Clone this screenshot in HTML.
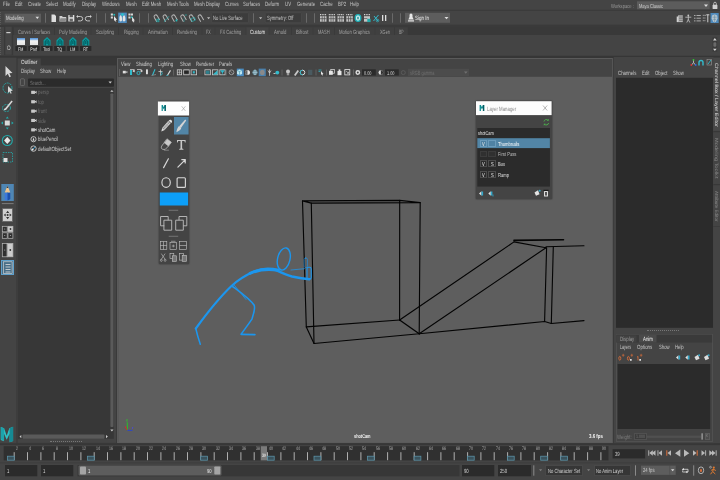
<!DOCTYPE html>
<html><head><meta charset="utf-8"><title>Maya - Blue Pencil</title>
<style>
html,body{margin:0;padding:0;background:#444;}
body{width:720px;height:480px;position:relative;overflow:hidden;font-family:"Liberation Sans",sans-serif;}
div{position:absolute;box-sizing:border-box;}
.t{position:absolute;white-space:nowrap;line-height:8px;height:8px;transform-origin:0 50%;}
svg{position:absolute;left:0;top:0;overflow:visible;}
#root{left:0;top:0;width:720px;height:480px;will-change:transform;}
</style></head><body><div id="root">

<span class="t" style="left:3px;top:-0.1px;font-size:6.11px;color:#c6c6c6;transform:scaleX(0.71) rotate(0.03deg);">File</span>
<span class="t" style="left:15px;top:-0.1px;font-size:6.11px;color:#c6c6c6;transform:scaleX(0.71) rotate(0.03deg);">Edit</span>
<span class="t" style="left:28.3px;top:-0.1px;font-size:6.11px;color:#c6c6c6;transform:scaleX(0.71) rotate(0.03deg);">Create</span>
<span class="t" style="left:46.3px;top:-0.1px;font-size:6.11px;color:#c6c6c6;transform:scaleX(0.71) rotate(0.03deg);">Select</span>
<span class="t" style="left:63px;top:-0.1px;font-size:6.11px;color:#c6c6c6;transform:scaleX(0.71) rotate(0.03deg);">Modify</span>
<span class="t" style="left:82px;top:-0.1px;font-size:6.11px;color:#c6c6c6;transform:scaleX(0.71) rotate(0.03deg);">Display</span>
<span class="t" style="left:101.7px;top:-0.1px;font-size:6.11px;color:#c6c6c6;transform:scaleX(0.71) rotate(0.03deg);">Windows</span>
<span class="t" style="left:125.8px;top:-0.1px;font-size:6.11px;color:#c6c6c6;transform:scaleX(0.71) rotate(0.03deg);">Mesh</span>
<span class="t" style="left:142px;top:-0.1px;font-size:6.11px;color:#c6c6c6;transform:scaleX(0.71) rotate(0.03deg);">Edit Mesh</span>
<span class="t" style="left:166.7px;top:-0.1px;font-size:6.11px;color:#c6c6c6;transform:scaleX(0.71) rotate(0.03deg);">Mesh Tools</span>
<span class="t" style="left:193.8px;top:-0.1px;font-size:6.11px;color:#c6c6c6;transform:scaleX(0.71) rotate(0.03deg);">Mesh Display</span>
<span class="t" style="left:225px;top:-0.1px;font-size:6.11px;color:#c6c6c6;transform:scaleX(0.71) rotate(0.03deg);">Curves</span>
<span class="t" style="left:243.3px;top:-0.1px;font-size:6.11px;color:#c6c6c6;transform:scaleX(0.71) rotate(0.03deg);">Surfaces</span>
<span class="t" style="left:265px;top:-0.1px;font-size:6.11px;color:#c6c6c6;transform:scaleX(0.71) rotate(0.03deg);">Deform</span>
<span class="t" style="left:285px;top:-0.1px;font-size:6.11px;color:#c6c6c6;transform:scaleX(0.71) rotate(0.03deg);">UV</span>
<span class="t" style="left:296.7px;top:-0.1px;font-size:6.11px;color:#c6c6c6;transform:scaleX(0.71) rotate(0.03deg);">Generate</span>
<span class="t" style="left:320px;top:-0.1px;font-size:6.11px;color:#c6c6c6;transform:scaleX(0.71) rotate(0.03deg);">Cache</span>
<span class="t" style="left:337.5px;top:-0.1px;font-size:6.11px;color:#c6c6c6;transform:scaleX(0.71) rotate(0.03deg);">BP2</span>
<span class="t" style="left:350px;top:-0.1px;font-size:6.11px;color:#c6c6c6;transform:scaleX(0.71) rotate(0.03deg);">Help</span>
<span class="t" style="left:611.3px;top:1.6px;font-size:5.68px;color:#969696;transform:scaleX(0.731) rotate(0.03deg);">Workspace :</span>
<svg width="720" height="480"><rect x="637" y="1.3" width="72.7" height="8" fill="#5c5c5c"/></svg>
<span class="t" style="left:638.7px;top:1.6px;font-size:5.68px;color:#cecece;transform:scaleX(0.711) rotate(0.03deg);">Maya Classic</span>
<svg width="720" height="480"><path d="M704 4.6h4l-2 2.3z" fill="#ddd"/><rect x="712.6" y="4.8" width="4.8" height="4.3" rx="0.6" fill="#d0d0d0"/><path d="M713.7 5v-1.4a1.3 1.4 0 0 1 2.6 0v1.4" stroke="#d0d0d0" stroke-width="0.8" fill="none"/></svg>
<svg width="720" height="480"><rect x="0" y="9.8" width="720" height="0.9" fill="#383838"/></svg>
<div style="left:0px;top:11.5px;width:3px;height:13px;border-left:1.2px dotted #5c5c5c;"></div>
<svg width="720" height="480"><rect x="4.7" y="13.7" width="36.3" height="8.8" fill="#5d5d5d"/></svg>
<span class="t" style="left:6px;top:14.2px;font-size:6.11px;color:#ddd;transform:scaleX(0.71) rotate(0.03deg);">Modeling</span>
<svg width="720" height="480"><rect x="45" y="13.3" width="0.9" height="9.4" fill="#6e6e6e"/><rect x="96" y="13.3" width="0.9" height="9.4" fill="#6e6e6e"/><rect x="105" y="13.3" width="0.9" height="9.4" fill="#6e6e6e"/><rect x="139" y="13.3" width="0.9" height="9.4" fill="#6e6e6e"/><rect x="148" y="13.3" width="0.9" height="9.4" fill="#6e6e6e"/><rect x="253" y="13.3" width="0.9" height="9.4" fill="#6e6e6e"/><rect x="306" y="13.3" width="0.9" height="9.4" fill="#6e6e6e"/><rect x="314" y="13.3" width="0.9" height="9.4" fill="#6e6e6e"/><rect x="392" y="13.3" width="0.9" height="9.4" fill="#6e6e6e"/><rect x="400" y="13.3" width="0.9" height="9.4" fill="#6e6e6e"/><rect x="211.7" y="12.8" width="36.8" height="10" rx="0.8" fill="#3c3c3c" stroke="#4e4e4e" stroke-width="0.6"/></svg>
<span class="t" style="left:213.4px;top:14.2px;font-size:6.11px;color:#c6c6c6;transform:scaleX(0.681) rotate(0.03deg);">No Live Surface</span>
<svg width="720" height="480"><rect x="265.2" y="12.8" width="36.3" height="10" rx="0.8" fill="#3c3c3c" stroke="#4e4e4e" stroke-width="0.6"/></svg>
<span class="t" style="left:267px;top:14.2px;font-size:6.11px;color:#c6c6c6;transform:scaleX(0.681) rotate(0.03deg);">Symmetry: Off</span>
<svg width="720" height="480"><rect x="405" y="12.8" width="45" height="10" fill="#5d5d5d"/></svg>
<span class="t" style="left:415px;top:14.2px;font-size:6.11px;color:#f0f0f0;transform:scaleX(0.736) rotate(0.03deg);">Sign In</span>
<svg width="720" height="480"><rect x="118.2" y="12.6" width="8.6" height="10.4" fill="#4e8abc"/><rect x="710.5" y="13" width="8.2" height="10" fill="#4e8abc"/></svg>
<svg width="720" height="480">
<path d="M35.5 16.8h3.6l-1.8 2.2z" fill="#ddd"/>
<path d="M51.5 14.5h3l1.5 1.5v6h-4.5z" fill="#ddd"/>
<path d="M59.5 16h2.5l.8 1h3.4v4.5h-6.7z" fill="#d0d0d0"/><path d="M60.5 18.3h6l-1 3.2h-6z" fill="#8a8a8a"/>
<rect x="68.3" y="15" width="6" height="6.5" rx="0.5" fill="#ddd"/><rect x="69.6" y="15" width="3.3" height="2.2" fill="#555"/><rect x="69.6" y="18.7" width="3.3" height="2.8" fill="#666"/>
<path d="M77 16.5h3.5a2.2 2.2 0 0 1 0 4.4h-2.5" fill="none" stroke="#d0d0d0" stroke-width="0.9"/><path d="M78 15l-1.8 1.5 1.8 1.5z" fill="#d0d0d0"/>
<path d="M91 16.5h-3.5a2.2 2.2 0 0 0 0 4.4h2.5" fill="none" stroke="#d0d0d0" stroke-width="0.9"/><path d="M90 15l1.8 1.5-1.8 1.5z" fill="#d0d0d0"/>
<path d="M110.8 13.5h2.1v2.1h-2.1zM110.8 16.4h2.1v2.1h-2.1z" fill="#d8d8d8"/><rect x="113.4" y="13.9" width="1.7" height="1.7" fill="#2bb"/><path d="M114 16l3 3.8-1.3.1.7 1.5-.8.3-.7-1.5-.9.8z" fill="#e8e8e8"/>
<path d="M119.4 18.5c0-2 .6-3.3 1.3-3.3s1.3 1.3 1.3 3.3v1.5c0 1-.5 1.4-1.3 1.4s-1.3-.4-1.3-1.4zM122.7 18.5c0-2 .6-3.3 1.3-3.3s1.4 1.3 1.4 3.3v1.5c0 1-.5 1.4-1.4 1.4s-1.3-.4-1.3-1.4z" fill="#e4e4e4"/><rect x="121.3" y="13.5" width="2.4" height="2" fill="#2cc"/>
<path d="M128.4 13.5h2.1v2.1h-2.1zM130.9 13.5h2.1v2.1h-2.1zM128.4 16.4h2.1v2.1h-2.1z" fill="#d8d8d8"/><rect x="130.9" y="16.4" width="1.7" height="1.7" fill="#2bb"/><path d="M132.1 16.8l2.8 3.7-1.2.1.7 1.5-.8.3-.7-1.5-.8.8z" fill="#e8e8e8"/>
<path d="M207 17.2h3.2l-1.6 2z" fill="#bbb"/><path d="M259 17.2h3.2l-1.6 2z" fill="#bbb"/>
<path d="M444.5 17h4l-2 2.3z" fill="#ddd"/>
<path d="M409.5 15a1.5 1.5 0 0 1 3 0v2l1.2 2.5h-5.4l1.2-2.5z" fill="#e8e8e8"/><rect x="408" y="20.3" width="6" height="1.2" fill="#e8e8e8"/>
</svg>
<svg width="720" height="480"><g transform="translate(156.3 17.6) rotate(-30)"><path d="M-1.7 3.8v-4.6a1.7 2 0 0 1 3.4 0v4.6" fill="none" stroke="#b4b4b4" stroke-width="1"/></g><path d="M157.1 18.5v3.8M158.6 18.5v3.8M156.1 19.7h3.6M156.1 21.2h3.6" stroke="#2bb" stroke-width="0.5"/><g transform="translate(165.3 17.6) rotate(-30)"><path d="M-1.7 3.8v-4.6a1.7 2 0 0 1 3.4 0v4.6" fill="none" stroke="#b4b4b4" stroke-width="1"/></g><path d="M164.4 21.8c1-2.5 3-3 4.5-5.5" stroke="#2bb" stroke-width="0.7" fill="none"/><g transform="translate(174 17.6) rotate(-30)"><path d="M-1.7 3.8v-4.6a1.7 2 0 0 1 3.4 0v4.6" fill="none" stroke="#b4b4b4" stroke-width="1"/></g><rect x="175.6" y="19.5" width="1.7" height="1.9" fill="#2bb"/><g transform="translate(183 17.6) rotate(-30)"><path d="M-1.7 3.8v-4.6a1.7 2 0 0 1 3.4 0v4.6" fill="none" stroke="#b4b4b4" stroke-width="1"/></g><path d="M184.1 17.5v4.5M185.1 14.3l1.5 1.5M186.6 14.3l-1.5 1.5" stroke="#2bb" stroke-width="0.6" stroke-dasharray="0.8 0.5"/><g transform="translate(191.5 17.6) rotate(-30)"><path d="M-1.7 3.8v-4.6a1.7 2 0 0 1 3.4 0v4.6" fill="none" stroke="#b4b4b4" stroke-width="1"/></g><path d="M191.1 18.5l3.5-1 .8 2.7-3.5 1.3z" fill="none" stroke="#2bb" stroke-width="0.6"/><g transform="translate(200.3 17.6) rotate(-30)"><path d="M-1.7 3.8v-4.6a1.7 2 0 0 1 3.4 0v4.6" fill="none" stroke="#b4b4b4" stroke-width="1"/></g></svg>
<svg width="720" height="480"><rect x="320" y="16.2" width="6.5" height="5.5" fill="#c4c4c4"/><path d="M320 14.7h6.5" stroke="#d8d8d8" stroke-width="1.3" stroke-dasharray="1 0.7"/><path d="M320 18.7h6.5M322.2 16.2v5.5M324.4 16.2v5.5" stroke="#484848" stroke-width="0.7"/><rect x="328.8" y="16.2" width="6.5" height="5.5" fill="#c4c4c4"/><path d="M328.8 14.7h6.5" stroke="#d8d8d8" stroke-width="1.3" stroke-dasharray="1 0.7"/><path d="M328.8 18.7h6.5M331 16.2v5.5M333.2 16.2v5.5" stroke="#484848" stroke-width="0.7"/><rect x="337.5" y="16.2" width="6.5" height="5.5" fill="#c4c4c4"/><path d="M337.5 14.7h6.5" stroke="#d8d8d8" stroke-width="1.3" stroke-dasharray="1 0.7"/><path d="M337.5 18.7h6.5M339.7 16.2v5.5M341.9 16.2v5.5" stroke="#484848" stroke-width="0.7"/><rect x="346.3" y="16.2" width="6.5" height="5.5" fill="#c4c4c4"/><path d="M346.3 14.7h6.5" stroke="#d8d8d8" stroke-width="1.3" stroke-dasharray="1 0.7"/><path d="M346.3 18.7h6.5M348.5 16.2v5.5M350.7 16.2v5.5" stroke="#484848" stroke-width="0.7"/><ellipse cx="358" cy="18" rx="2.8" ry="3.3" fill="#cfeff0" stroke="#1fb0b8" stroke-width="1.3"/><ellipse cx="358" cy="18" rx="0.8" ry="1.5" fill="#2a8a90"/><rect x="364" y="16.2" width="6" height="5.5" fill="#c4c4c4"/><path d="M364 14.7h6" stroke="#d8d8d8" stroke-width="1.3" stroke-dasharray="1 0.7"/><rect x="367.3" y="18.8" width="3.3" height="3.3" fill="#2aa"/><path d="M364 18.5h3.3" stroke="#484848" stroke-width="0.6"/><path d="M373.5 21l5-6M374 16l4 5" stroke="#3bc" stroke-width="1"/><circle cx="377.5" cy="20.5" r="1.3" fill="none" stroke="#3bc" stroke-width="0.7"/><rect x="382" y="15" width="1.3" height="6" fill="#ddd"/><rect x="385" y="15" width="1.3" height="6" fill="#ddd"/><path d="M678 15.3h4.8v6.8h-4.8z" fill="#b4b4b4"/><path d="M676.7 16.5h1.5v5.6h-1.5z" fill="#d0d0d0"/><path d="M679 17h3.8M679 18.7h3.8M679 20.4h3.8" stroke="#555" stroke-width="0.6"/><circle cx="688.3" cy="15.3" r="0.9" fill="#c8c8c8"/><path d="M688.3 16v4M685.3 17.2h6M688.3 19.5l-1.5 3M688.3 19.5l1.5 3" stroke="#c8c8c8" stroke-width="0.8" fill="none"/><path d="M694 15.5h1.5M696.5 15.5h4.3M694 18.2h1.5M696.5 18.2h4.3M694 20.9h1.5M696.5 20.9h4.3" stroke="#b8b8b8" stroke-width="0.9"/><path d="M702.8 15.3h1M704.4 15.3h1.4M702.8 18h1M704.4 18h1M702.8 20.7h1M704.4 20.7h1" stroke="#c0c0c0" stroke-width="0.9"/><path d="M707.8 14.8v7.5M706.3 14.8h3" stroke="#cfcfcf" stroke-width="1"/><path d="M714.6 14.2l2.6 1.3.3 3-1.3 2.7-1.6 1.3-1.6-1.3-1.3-2.7.3-3z" fill="#b4c4cf"/><path d="M712.6 17.2h4M713.2 19.4h2.8M714.6 14.5v7.5" stroke="#5d8098" stroke-width="0.5"/></svg>
<svg width="720" height="480"><rect x="0" y="24.7" width="720" height="2" fill="#3a3a3a"/><rect x="0" y="26.7" width="720" height="8.3" fill="#393939"/><rect x="13.5" y="27.2" width="40.6" height="7.8" fill="#404040"/></svg>
<span class="t" style="left:17.7px;top:27.5px;font-size:6.11px;color:#a0a0a0;transform:scaleX(0.667) rotate(0.03deg);">Curves / Surfaces</span>
<svg width="720" height="480"><rect x="54.7" y="27.2" width="36" height="7.8" fill="#404040"/></svg>
<span class="t" style="left:59px;top:27.5px;font-size:6.11px;color:#a0a0a0;transform:scaleX(0.73) rotate(0.03deg);">Poly Modeling</span>
<svg width="720" height="480"><rect x="91.3" y="27.2" width="26.8" height="7.8" fill="#404040"/></svg>
<span class="t" style="left:96px;top:27.5px;font-size:6.11px;color:#a0a0a0;transform:scaleX(0.716) rotate(0.03deg);">Sculpting</span>
<svg width="720" height="480"><rect x="118.7" y="27.2" width="24" height="7.8" fill="#404040"/></svg>
<span class="t" style="left:123.6px;top:27.5px;font-size:6.11px;color:#a0a0a0;transform:scaleX(0.714) rotate(0.03deg);">Rigging</span>
<svg width="720" height="480"><rect x="143.3" y="27.2" width="28.8" height="7.8" fill="#404040"/></svg>
<span class="t" style="left:148px;top:27.5px;font-size:6.11px;color:#a0a0a0;transform:scaleX(0.721) rotate(0.03deg);">Animation</span>
<svg width="720" height="480"><rect x="172.7" y="27.2" width="29" height="7.8" fill="#404040"/></svg>
<span class="t" style="left:177px;top:27.5px;font-size:6.11px;color:#a0a0a0;transform:scaleX(0.709) rotate(0.03deg);">Rendering</span>
<svg width="720" height="480"><rect x="202.3" y="27.2" width="12.4" height="7.8" fill="#404040"/></svg>
<span class="t" style="left:206px;top:27.5px;font-size:6.11px;color:#a0a0a0;transform:scaleX(0.576) rotate(0.03deg);">FX</span>
<svg width="720" height="480"><rect x="215.3" y="27.2" width="30.4" height="7.8" fill="#404040"/></svg>
<span class="t" style="left:219.6px;top:27.5px;font-size:6.11px;color:#a0a0a0;transform:scaleX(0.67) rotate(0.03deg);">FX Caching</span>
<svg width="720" height="480"><rect x="246.3" y="27.2" width="22.4" height="7.8" fill="#444"/></svg>
<span class="t" style="left:250px;top:27.5px;font-size:6.11px;color:#f0f0f0;transform:scaleX(0.713) rotate(0.03deg);">Custom</span>
<svg width="720" height="480"><rect x="269.3" y="27.2" width="21.8" height="7.8" fill="#404040"/></svg>
<span class="t" style="left:274px;top:27.5px;font-size:6.11px;color:#a0a0a0;transform:scaleX(0.702) rotate(0.03deg);">Arnold</span>
<svg width="720" height="480"><rect x="291.7" y="27.2" width="21" height="7.8" fill="#404040"/></svg>
<span class="t" style="left:296px;top:27.5px;font-size:6.11px;color:#a0a0a0;transform:scaleX(0.716) rotate(0.03deg);">Bifrost</span>
<svg width="720" height="480"><rect x="313.3" y="27.2" width="20.8" height="7.8" fill="#404040"/></svg>
<span class="t" style="left:318px;top:27.5px;font-size:6.11px;color:#a0a0a0;transform:scaleX(0.657) rotate(0.03deg);">MASH</span>
<svg width="720" height="480"><rect x="334.7" y="27.2" width="40" height="7.8" fill="#404040"/></svg>
<span class="t" style="left:339px;top:27.5px;font-size:6.11px;color:#a0a0a0;transform:scaleX(0.697) rotate(0.03deg);">Motion Graphics</span>
<svg width="720" height="480"><rect x="375.3" y="27.2" width="18.8" height="7.8" fill="#404040"/></svg>
<span class="t" style="left:380px;top:27.5px;font-size:6.11px;color:#a0a0a0;transform:scaleX(0.64) rotate(0.03deg);">XGen</span>
<svg width="720" height="480"><rect x="394.7" y="27.2" width="13" height="7.8" fill="#404040"/></svg>
<span class="t" style="left:399px;top:27.5px;font-size:6.11px;color:#a0a0a0;transform:scaleX(0.564) rotate(0.03deg);">BP</span>
<svg width="720" height="480"><rect x="0" y="26.7" width="13.3" height="28.5" fill="#393939"/></svg>
<div style="left:0px;top:26.7px;width:3.8px;height:28.5px;background:#444;border-left:1.2px dotted #5a5a5a;"></div>
<svg width="720" height="480"><rect x="5.3" y="26.7" width="6.4" height="28" fill="#454545"/><rect x="6.3" y="32" width="4.2" height="1.2" fill="#ccc"/></svg>
<span class="t" style="left:6.7px;top:44.3px;font-size:6.53px;color:#ccc;transform:scaleX(0.71) rotate(0.03deg);">O</span>
<svg width="720" height="480"><rect x="13.3" y="35" width="706.7" height="20.5" fill="#444"/></svg>
<div style="left:17.4px;top:37.5px;width:7.7px;height:7.7px;background:linear-gradient(#4f8fd6 0%,#8db7e4 22%,#f2f2f2 40%,#e4e4e4 100%);"></div>
<svg width="720" height="480"><rect x="15.4" y="46" width="11.3" height="4.9" fill="#2a2a2a"/></svg>
<span class="t" style="left:15.4px;top:44.5px;width:11.3px;text-align:center;font-size:5px;color:#e8e8e8;transform-origin:50% 50%;transform:scaleX(0.74) rotate(0.03deg);">FM</span>
<div style="left:30.33px;top:37.5px;width:7.7px;height:7.7px;background:linear-gradient(#4f8fd6 0%,#8db7e4 22%,#f2f2f2 40%,#e4e4e4 100%);"></div>
<svg width="720" height="480"><rect x="28.33" y="46" width="11.3" height="4.9" fill="#2a2a2a"/></svg>
<span class="t" style="left:28.33px;top:44.5px;width:11.3px;text-align:center;font-size:5px;color:#e8e8e8;transform-origin:50% 50%;transform:scaleX(0.74) rotate(0.03deg);">Pref</span>
<svg width="720" height="480"><path d="M43.56 45.6v-5.3l3.5-3.3 3.5 3.3v5.3z" fill="#0a9a9e"/><path d="M45.16 45.6v-4.3l1.9-1.8 1.9 1.8v4.3M47.06 41v3" fill="none" stroke="#023c40" stroke-width="0.8"/></svg>
<svg width="720" height="480"><rect x="41.26" y="46" width="11.3" height="4.9" fill="#2a2a2a"/></svg>
<span class="t" style="left:41.26px;top:44.5px;width:11.3px;text-align:center;font-size:5px;color:#e8e8e8;transform-origin:50% 50%;transform:scaleX(0.74) rotate(0.03deg);">Tool</span>
<svg width="720" height="480"><path d="M56.49 45.6v-5.3l3.5-3.3 3.5 3.3v5.3z" fill="#0a9a9e"/><path d="M58.09 45.6v-4.3l1.9-1.8 1.9 1.8v4.3M59.99 41v3" fill="none" stroke="#023c40" stroke-width="0.8"/></svg>
<svg width="720" height="480"><rect x="54.19" y="46" width="11.3" height="4.9" fill="#2a2a2a"/></svg>
<span class="t" style="left:54.19px;top:44.5px;width:11.3px;text-align:center;font-size:5px;color:#e8e8e8;transform-origin:50% 50%;transform:scaleX(0.74) rotate(0.03deg);">TQ</span>
<svg width="720" height="480"><path d="M69.42 45.6v-5.3l3.5-3.3 3.5 3.3v5.3z" fill="#0a9a9e"/><path d="M71.02 45.6v-4.3l1.9-1.8 1.9 1.8v4.3M72.92 41v3" fill="none" stroke="#023c40" stroke-width="0.8"/></svg>
<svg width="720" height="480"><rect x="67.12" y="46" width="11.3" height="4.9" fill="#2a2a2a"/></svg>
<span class="t" style="left:67.12px;top:44.5px;width:11.3px;text-align:center;font-size:5px;color:#e8e8e8;transform-origin:50% 50%;transform:scaleX(0.74) rotate(0.03deg);">LM</span>
<svg width="720" height="480"><path d="M82.35 45.6v-5.3l3.5-3.3 3.5 3.3v5.3z" fill="#0a9a9e"/><path d="M83.95 45.6v-4.3l1.9-1.8 1.9 1.8v4.3M85.85 41v3" fill="none" stroke="#023c40" stroke-width="0.8"/></svg>
<svg width="720" height="480"><rect x="80.05" y="46" width="11.3" height="4.9" fill="#2a2a2a"/></svg>
<span class="t" style="left:80.05px;top:44.5px;width:11.3px;text-align:center;font-size:5px;color:#e8e8e8;transform-origin:50% 50%;transform:scaleX(0.74) rotate(0.03deg);">RT</span>
<svg width="720" height="480"><rect x="712.4" y="37.2" width="4.8" height="14.6" fill="#3c3c3c"/></svg>
<svg width="720" height="480"><path d="M713 40.4l1.85-2.3 1.85 2.3zM713 48.8l1.85 2.3 1.85-2.3z" fill="#d4d4d4"/><rect x="713.4" y="42.3" width="2.9" height="4.4" rx="1.2" fill="#6a6a6a"/></svg>
<svg width="720" height="480"><rect x="0" y="55.8" width="720" height="2.1" fill="#363636"/><rect x="0" y="57.7" width="16.5" height="385" fill="#444"/></svg>
<svg width="720" height="480">
<path d="M5.5 66l0 10 2.3-2.2 1.6 3.4 1.5-.7-1.6-3.3 3.2-.2z" fill="#d8d8d8"/>
<ellipse cx="7.5" cy="88" rx="4.5" ry="5" fill="none" stroke="#2aa" stroke-width="0.9" stroke-dasharray="2 1"/>
<path d="M8 86l0 7 1.6-1.5 1.1 2.3 1-.5-1.1-2.3 2.2-.2z" fill="#d8d8d8"/>
<ellipse cx="6.5" cy="108" rx="4" ry="3.5" fill="none" stroke="#2aa" stroke-width="0.9" stroke-dasharray="2 1"/>
<path d="M5 108.5l6.5-8 1.2 1-6.3 8z" fill="#d8d8d8"/><path d="M3.5 110.5l1.5-2.5 1.5 1.5z" fill="#eee"/>
<rect x="4.8" y="120.5" width="5" height="5" fill="#d8d8d8"/>
<path d="M7.3 116.5l1.5 2h-3zM7.3 129.5l1.5-2h-3zM1 123l2-1.5v3zM13.6 123l-2-1.5v3z" fill="#2aa"/>
<circle cx="7.3" cy="140.5" r="5" fill="none" stroke="#2aa" stroke-width="1.1"/><path d="M7.3 137l3.2 3.5-3.2 3.5-3.2-3.5z" fill="#e8e8e8"/>
<rect x="3" y="152.5" width="9.5" height="9.5" fill="none" stroke="#2aa" stroke-width="0.8" stroke-dasharray="1.5 1"/><rect x="3.5" y="158" width="4" height="4" fill="#e0e0e0"/>
</svg>
<svg width="720" height="480"><rect x="1.3" y="184" width="12.5" height="17" fill="#4f86b4"/></svg>
<svg width="720" height="480">
<path d="M4.7 192.5l2.8-6.8 2.8 6.8z" fill="#f0c58e"/><path d="M6.7 188l.8-2.3.8 2.3z" fill="#3a3a3a"/>
<path d="M4.7 192.5l1.4.6 1.4-.6v7.5l-1.4.4-1.4-1z" fill="#3b78dc"/><path d="M7.5 192.5l1.4.6 1.4-.6v6.4l-1.4 1-1.4.5z" fill="#1c4fae"/>
</svg>
<svg width="720" height="480"><rect x="1.8" y="203" width="11.8" height="1.1" fill="#757575"/></svg>
<div style="left:2px;top:208.3px;width:11.3px;height:13.3px;background:#cfcfcf;border:0.9px solid #6a6a6a;border-radius:1px;"></div>
<svg width="720" height="480">
<path d="M7.65 210.8l1.6 2.1h-3.2zM7.65 219.2l1.6-2.1h-3.2zM3.7 215l2-1.5v3zM11.6 215l-2-1.5v3z" fill="#333"/><circle cx="7.65" cy="215" r="1" fill="#333"/>
<g fill="#303030" stroke="#b8b8b8" stroke-width="0.7"><rect x="2.3" y="226.3" width="4.9" height="5.5"/><rect x="8" y="226.3" width="4.9" height="5.5" fill="#ccc"/><rect x="2.3" y="232.8" width="4.9" height="5.5"/><rect x="8" y="232.8" width="4.9" height="5.5"/>
<rect x="2.3" y="243.5" width="4.7" height="13.3"/><rect x="7.6" y="243.5" width="5.3" height="13.3" fill="#ccc"/></g>
<circle cx="10.5" cy="229" r="0.9" fill="#333"/><circle cx="10.3" cy="250" r="0.9" fill="#333"/><circle cx="4.7" cy="229" r="0.6" fill="#aaa"/><circle cx="4.7" cy="235.5" r="0.6" fill="#aaa"/><circle cx="10.5" cy="235.5" r="0.6" fill="#aaa"/><circle cx="4.7" cy="250" r="0.6" fill="#aaa"/>
</svg>
<div style="left:1.3px;top:259.7px;width:12.5px;height:15.8px;background:#4a6f88;border:0.8px solid #5ea0cc;"></div>
<svg width="720" height="480"><g stroke="#e0e0e0" stroke-width="0.8" fill="none"><rect x="3.3" y="261.8" width="8.8" height="11.8" stroke-width="0.6"/><path d="M5.5 264.5h5M5.5 267h5M5.5 269.5h5M5.5 272h5"/></g>
<path d="M0.8 427l3.3 1.2 2.6 7.5 2.6-7.5 3.8-1.5v14.3l-3.5 1.3v-8.5l-2.9 6-2.9-6.5v8l-3-1.3z" fill="#2fc0c4"/><path d="M9.6 428.3l3.5-1.6v14.3l-3.5 1.3z" fill="#168a94"/><path d="M0.8 427l3.3 1.2v12.3l-3.3-1.3z" fill="#1da3ab"/></svg>
<svg width="720" height="480"><rect x="16.5" y="57.7" width="101" height="385.5" fill="#373737"/><rect x="17.5" y="65.4" width="98.8" height="377.5" fill="#444"/><rect x="17.6" y="58.4" width="23.2" height="7.6" fill="#444"/></svg>
<span class="t" style="left:21.2px;top:58.4px;font-size:6.11px;color:#e4e4e4;transform:scaleX(0.767) rotate(0.03deg);">Outliner</span>
<span class="t" style="left:21px;top:67.3px;font-size:6.11px;color:#c6c6c6;transform:scaleX(0.699) rotate(0.03deg);">Display</span>
<span class="t" style="left:40px;top:67.3px;font-size:6.11px;color:#c6c6c6;transform:scaleX(0.733) rotate(0.03deg);">Show</span>
<span class="t" style="left:56.7px;top:67.3px;font-size:6.11px;color:#c6c6c6;transform:scaleX(0.724) rotate(0.03deg);">Help</span>
<svg width="720" height="480"><rect x="28" y="78.5" width="86" height="8.3" rx="1" fill="#2b2b2b"/></svg>
<span class="t" style="left:29.5px;top:78.7px;font-size:5.96px;color:#7c7c7c;transform:scaleX(0.65) rotate(0.03deg);">Search...</span>
<svg width="720" height="480"><rect x="20.4" y="78.8" width="4" height="6.8" rx="0.9" fill="none" stroke="#777" stroke-width="0.7"/><path d="M108.5 81.5h3.4l-1.7 2z" fill="#ccc"/></svg>
<svg width="720" height="480"><rect x="18" y="88" width="95.8" height="350.8" fill="#373737"/><rect x="110.4" y="93.5" width="3" height="333.5" rx="0.8" fill="#5a5a5a"/></svg>
<svg width="720" height="480"><path d="M110.3 91.8l1.6-1.9 1.6 1.9zM110.3 429.5l1.6 1.9 1.6-1.9z" fill="#ccc"/></svg>
<span class="t" style="left:38px;top:88.4px;font-size:6.11px;color:#6e6e6e;transform:scaleX(0.71) rotate(0.03deg);">persp</span>
<span class="t" style="left:38px;top:97.8px;font-size:6.11px;color:#6e6e6e;transform:scaleX(0.71) rotate(0.03deg);">top</span>
<span class="t" style="left:38px;top:107.2px;font-size:6.11px;color:#6e6e6e;transform:scaleX(0.71) rotate(0.03deg);">front</span>
<span class="t" style="left:38px;top:116.5px;font-size:6.11px;color:#6e6e6e;transform:scaleX(0.71) rotate(0.03deg);">side</span>
<span class="t" style="left:38px;top:125.9px;font-size:6.11px;color:#d0d0d0;transform:scaleX(0.71) rotate(0.03deg);">shotCam</span>
<span class="t" style="left:38px;top:135.4px;font-size:6.11px;color:#d0d0d0;transform:scaleX(0.71) rotate(0.03deg);">bluePencil</span>
<span class="t" style="left:38px;top:144.8px;font-size:6.11px;color:#d0d0d0;transform:scaleX(0.735) rotate(0.03deg);">defaultObjectSet</span>
<svg width="720" height="480"><rect x="31.3" y="90.8" width="3.5" height="3.1" fill="#e4e4e4"/><path d="M34.7 92.3l1.8-1.5v3z" fill="#e4e4e4"/><path d="M33 90.8v3.1" stroke="#555" stroke-width="0.4"/><rect x="31.3" y="100.2" width="3.5" height="3.1" fill="#e4e4e4"/><path d="M34.7 101.7l1.8-1.5v3z" fill="#e4e4e4"/><path d="M33 100.2v3.1" stroke="#555" stroke-width="0.4"/><rect x="31.3" y="109.6" width="3.5" height="3.1" fill="#e4e4e4"/><path d="M34.7 111.1l1.8-1.5v3z" fill="#e4e4e4"/><path d="M33 109.6v3.1" stroke="#555" stroke-width="0.4"/><rect x="31.3" y="118.9" width="3.5" height="3.1" fill="#e4e4e4"/><path d="M34.7 120.4l1.8-1.5v3z" fill="#e4e4e4"/><path d="M33 118.9v3.1" stroke="#555" stroke-width="0.4"/><rect x="31.3" y="128.3" width="3.5" height="3.1" fill="#e4e4e4"/><path d="M34.7 129.8l1.8-1.5v3z" fill="#e4e4e4"/><path d="M33 128.3v3.1" stroke="#555" stroke-width="0.4"/><circle cx="33.5" cy="139.2" r="2.6" fill="none" stroke="#ddd" stroke-width="0.8"/><path d="M32.5 140.7l1-3.5 1 3.5z" fill="#ddd"/><circle cx="33.5" cy="148.6" r="2.7" fill="none" stroke="#ddd" stroke-width="0.8"/><path d="M31.8 150.1l3.5-3.2" stroke="#39c" stroke-width="1"/><circle cx="32.6" cy="149.4" r="1" fill="#eee"/></svg>
<svg width="720" height="480"><rect x="22.5" y="434.6" width="82" height="4.1" rx="0.8" fill="#5a5a5a"/></svg>
<svg width="720" height="480"><path d="M21.3 435l-1.8 1.6 1.8 1.6zM106 435l1.9 1.6-1.9 1.6z" fill="#ccc"/></svg>
<div style="left:50px;top:441px;width:32px;height:0.6px;border-top:0.7px dotted #777;"></div>
<div style="left:117.3px;top:57.8px;width:495.6px;height:385.5px;background:#444;border:0.9px solid #5a5a5a;"></div>
<span class="t" style="left:121px;top:59.7px;font-size:6.11px;color:#ccc;transform:scaleX(0.71) rotate(0.03deg);">View</span>
<span class="t" style="left:136px;top:59.7px;font-size:6.11px;color:#ccc;transform:scaleX(0.71) rotate(0.03deg);">Shading</span>
<span class="t" style="left:158px;top:59.7px;font-size:6.11px;color:#ccc;transform:scaleX(0.71) rotate(0.03deg);">Lighting</span>
<span class="t" style="left:179.5px;top:59.7px;font-size:6.11px;color:#ccc;transform:scaleX(0.71) rotate(0.03deg);">Show</span>
<span class="t" style="left:196px;top:59.7px;font-size:6.11px;color:#ccc;transform:scaleX(0.71) rotate(0.03deg);">Renderer</span>
<span class="t" style="left:219.3px;top:59.7px;font-size:6.11px;color:#ccc;transform:scaleX(0.71) rotate(0.03deg);">Panels</span>
<svg width="720" height="480"><rect x="118.2" y="76.8" width="493.8" height="365.6" fill="#5e5e5e"/></svg>
<svg width="720" height="480"><path d="M119.6 69v7" stroke="#777" stroke-width="0.6"/><rect x="122.8" y="70.8" width="3" height="2.6" fill="#e0e0e0"/><path d="M125.8 72.1l1.5-1.2v2.4z" fill="#e0e0e0"/><rect x="130" y="70" width="2" height="5" fill="#3bc"/><path d="M130 69.5h4.5M132.8 71l1.5-1v2z" stroke="#ddd" stroke-width="0.7" fill="#ddd"/><circle cx="138.5" cy="73" r="1.6" fill="none" stroke="#3bc" stroke-width="0.9"/><path d="M137 69.5h4.5M140.5 71l1.5-1v2z" stroke="#ddd" stroke-width="0.7" fill="#ddd"/><rect x="146" y="69.3" width="1.9" height="5" rx="0.5" fill="#e0e0e0"/><path d="M152 75l2.5-6 1 .5-2.5 6z" fill="#3bc"/><path d="M151.5 75.5l4.5-1" stroke="#aaa" stroke-width="0.6"/><path d="M160.5 69.5v6M158.5 71.5h4" stroke="#ddd" stroke-width="0.7"/><path d="M161 72a1.5 1.5 0 1 1-.5 3" fill="none" stroke="#3bc" stroke-width="0.8"/><path d="M167 75l3-5 1 .7-3 4.8z" fill="#ddd"/><path d="M166.3 75.5l2-.3" stroke="#3bc" stroke-width="0.8"/><path d="M173.6 69.5v6" stroke="#777" stroke-width="0.6"/><rect x="177.3" y="69.8" width="4.3" height="5" fill="none" stroke="#cacaca" stroke-width="0.8"/><path d="M179.45 69.8v5M177.3 72.3h4.3" stroke="#cacaca" stroke-width="0.6"/><rect x="183.7" y="69.8" width="5.5" height="5" fill="none" stroke="#cacaca" stroke-width="0.8"/><rect x="184.3" y="71" width="4.3" height="2.6" fill="#262626"/><rect x="191.1" y="69.8" width="5.5" height="5" fill="none" stroke="#cacaca" stroke-width="0.8"/><rect x="192.8" y="71.2" width="2" height="2.2" fill="#3bc"/><rect x="198.5" y="69.8" width="4.5" height="5" fill="#4c4c4c"/><rect x="204.9" y="69.8" width="5.6" height="5" fill="none" stroke="#cacaca" stroke-width="0.8"/><rect x="205.8" y="70.7" width="3.8" height="3.2" fill="#2f7f8c"/><rect x="212.4" y="69.8" width="5.5" height="5" fill="none" stroke="#cacaca" stroke-width="0.8"/><path d="M212.8 74.4l4.7-4.2v4.2z" fill="#3bc"/><rect x="219.8" y="69.8" width="5.3" height="5" fill="none" stroke="#cacaca" stroke-width="0.8"/><path d="M220.6 70.6h3.7l-1.85 2.3zM222.45 72v2.5" fill="#3bc" stroke="#3bc" stroke-width="0.6"/><path d="M226.3 69.5v6" stroke="#777" stroke-width="0.6"/><circle cx="231.5" cy="72.3" r="2.4" fill="none" stroke="#aaa" stroke-width="0.8"/><path d="M230 70.8l3 3" stroke="#aaa" stroke-width="0.6"/></svg>
<svg width="720" height="480"><rect x="236.8" y="68.6" width="7" height="7.6" fill="#4a8cc0"/><rect x="258.7" y="68.6" width="7.1" height="7.6" fill="#4a80ac"/></svg>
<svg width="720" height="480"><path d="M237 70.5l2.5-1 2.5 1v3.5l-2.5 1-2.5-1z" fill="#bfe6f0"/><path d="M237 70.5l2.5 1 2.5-1M239.5 71.5v3.5" stroke="#3a8aa0" stroke-width="0.5" fill="none"/><circle cx="247.5" cy="72.4" r="2.5" fill="#e6e6e6"/><path d="M247.5 69.9a2.5 2.5 0 0 0 0 5z" fill="#666"/><circle cx="255" cy="72.4" r="2.6" fill="#5a7d86"/><path d="M252.4 72.4h5.2M255 69.8v5.2" stroke="#bde" stroke-width="0.5"/><ellipse cx="255" cy="72.4" rx="1.2" ry="2.6" fill="none" stroke="#bde" stroke-width="0.5"/><ellipse cx="262.3" cy="72.4" rx="2.3" ry="2.7" fill="#8a8a8a"/><path d="M269.5 69.3v6.5M268 70.5l1.5 2.5 1.5-2.5" stroke="#ddd" stroke-width="0.7" fill="none"/><circle cx="277.3" cy="72.6" r="1.9" fill="#3bc"/><path d="M273.5 73.5h2" stroke="#ddd" stroke-width="0.8"/><path d="M282 69.5v6" stroke="#777" stroke-width="0.6"/><circle cx="288" cy="71.5" r="2" fill="#c8c8c8"/><rect x="286.8" y="73" width="2.4" height="2.3" fill="#9a9a9a"/><path d="M294 75l3.5-5 1.5 1-3.5 5z" fill="#c8c8c8"/><circle cx="302.5" cy="72.5" r="2.3" fill="none" stroke="#ddd" stroke-width="1"/><path d="M302.5 70.2a2.3 2.3 0 0 0 0 4.6" stroke="#3bc" stroke-width="1" fill="none"/><rect x="308" y="69.8" width="4.3" height="5.2" fill="#4a5a60"/><path d="M316 69.5v6" stroke="#777" stroke-width="0.6"/><path d="M318.5 70h3M318.5 71.5h2" stroke="#3bc" stroke-width="0.7"/><path d="M321 71l2.5 3-1 .1.5 1.2-.7.2-.5-1.2-.8.6z" fill="#e6e6e6"/><path d="M326.5 69.5v6" stroke="#777" stroke-width="0.6"/><rect x="329" y="70.8" width="3.8" height="4" fill="#e6e6e6"/><rect x="330.8" y="69.5" width="3.5" height="3.7" fill="none" stroke="#e6e6e6" stroke-width="0.7"/><rect x="337.5" y="71" width="4" height="4.2" fill="#e6e6e6"/><rect x="338.6" y="69.4" width="1.8" height="1.6" fill="#e6e6e6"/><rect x="344.8" y="69.6" width="5" height="5.3" fill="none" stroke="#e6e6e6" stroke-width="0.8"/><path d="M346 70.8l2.5 2.5M348.5 71.8v1.5h-1.5" stroke="#e6e6e6" stroke-width="0.6" fill="none"/><path d="M353.5 69.5v6" stroke="#777" stroke-width="0.6"/><circle cx="357.8" cy="72.5" r="1.7" fill="none" stroke="#e0e0e0" stroke-width="1.4"/><circle cx="380.8" cy="72.5" r="2.3" fill="#e0e0e0"/><path d="M380.8 70.2a2.3 2.3 0 0 1 0 4.6z" fill="#333"/><circle cx="403.3" cy="72.6" r="2" fill="none" stroke="#5e5e5e" stroke-width="0.8"/><path d="M464 71.5h3.6l-1.8 2.2z" fill="#6e6e6e"/></svg>
<svg width="720" height="480"><rect x="362" y="69.3" width="13.8" height="6.3" fill="#2b2b2b"/></svg>
<span class="t" style="left:364.2px;top:68.6px;font-size:5.4px;color:#ddd;transform:scaleX(0.71) rotate(0.03deg);">0.00</span>
<svg width="720" height="480"><rect x="385" y="69.3" width="13.8" height="6.3" fill="#2b2b2b"/></svg>
<span class="t" style="left:387.2px;top:68.6px;font-size:5.4px;color:#ddd;transform:scaleX(0.71) rotate(0.03deg);">1.00</span>
<svg width="720" height="480"><rect x="408" y="68.8" width="61" height="7.4" fill="#4c4c4c"/></svg>
<span class="t" style="left:409.7px;top:68.7px;font-size:6.11px;color:#6e6e6e;transform:scaleX(0.633) rotate(0.03deg);">sRGB gamma</span>
<svg width="720" height="480"><path d="M464 71.5h3.6l-1.8 2.2z" fill="#707070"/></svg>
<svg width="720" height="480">
<g fill="none" stroke="#040404" stroke-width="1.12" stroke-linecap="round" stroke-linejoin="round">
<path d="M302.5 200.9L399.7 200.4L420.2 202.6L311.3 203.1Z"/>
<path d="M302.5 200.9L306.3 326.9M311.3 203.1L314 343.5M399.7 200.4L399.6 320M420.2 202.6L419.2 333.8"/>
<path d="M306.3 326.9L399.6 320M314 343.5L419.2 333.8M306.3 326.9L314 343.5"/>
<path d="M399.6 320L419.2 333.8" stroke-width="1.3"/>
<path d="M399.6 320L514 241.9M419.2 333.8L546 247.7"/>
<path d="M514 240.4L563.5 239.8" stroke-width="1.6"/><path d="M514 241.9L546 247.7M546 246.8L584 245.7"/>
<path d="M546.6 247.7L544.6 321.5M553.3 246.8L551.3 323.5"/>
<path d="M419.2 333.8L544.6 321.5L551.3 323.5L584 320.6"/>
</g>
<g fill="none" stroke="#1c96ee" stroke-linecap="round" stroke-linejoin="round">
<ellipse cx="283.8" cy="259" rx="6.2" ry="11.3" transform="rotate(13 283.8 259)" stroke-width="1.4"/>
<path d="M278.5 270C270 268 262 268 254 271.5C246 275 238 280 231.5 286C222 295 210 309 195.8 328.5" stroke-width="2.2"/>
<path d="M195.8 328.5C197 334 198.5 339 200.3 344.3" stroke-width="1.5"/>
<path d="M232 286C240 292 250 299 254.2 305.3C255.5 309 253.5 314 251.9 319.1C248 325 244 330 241.3 334" stroke-width="1.6"/>
<path d="M241.3 334.3L254.9 334.7" stroke-width="1.7"/>
<path d="M233.8 284.5L246 299.5" stroke-width="1" opacity="0.8"/>
<path d="M276 270.2C281 272.5 287 275.3 292 276.5C298 277.8 304 278.8 309.5 279.2" stroke-width="2.4"/>
<path d="M250 273.3C259 269.5 268 268.8 278 270.3" stroke-width="3"/>
<path d="M291 270L304.6 268.7" stroke-width="0.9" opacity="0.8"/>
<rect x="307" y="267.3" width="4.2" height="11.8" rx="1.6" stroke-width="1.1"/>
<rect x="304.2" y="258" width="3.2" height="9.6" rx="1.4" stroke-width="0.8" opacity="0.8"/>
</g>
<g stroke-width="0.9" fill="none"><path d="M127.3 430.3v-8" stroke="#2c2"/><path d="M127.3 430.3l-2-3" stroke="#d22"/><path d="M127.3 430.3h5.2" stroke="#24d"/></g>
</svg>
<span class="t" style="left:126.3px;top:416.5px;font-size:3.98px;color:#2d2;transform:scaleX(0.71) rotate(0.03deg);font-weight:bold;">Y</span>
<span class="t" style="left:132.3px;top:423.5px;font-size:3.69px;color:#44f;transform:scaleX(0.71) rotate(0.03deg);font-weight:bold;">z</span>
<span class="t" style="left:124.5px;top:422.6px;font-size:3.27px;color:#e22;transform:scaleX(0.71) rotate(0.03deg);font-weight:bold;">x</span>
<span class="t" style="left:353.6px;top:432px;font-size:5.54px;color:#f4f4f4;transform:scaleX(0.696) rotate(0.03deg);font-weight:bold;">shotCam</span>
<span class="t" style="left:589.3px;top:432px;font-size:5.68px;color:#f4f4f4;transform:scaleX(0.778) rotate(0.03deg);font-weight:bold;">3.6 fps</span>
<div style="left:158.5px;top:101.4px;width:30.8px;height:162.5px;background:#444;box-shadow:0 0 1.5px rgba(0,0,0,.55);"></div>
<svg width="720" height="480"><rect x="157.9" y="101.5" width="31.2" height="14" fill="#fdfdfd"/><rect x="174" y="117" width="14.6" height="17.5" fill="#5285a6"/><rect x="159.8" y="192.5" width="28.3" height="13" fill="#0d9ff8"/><rect x="168.7" y="209.8" width="9.5" height="0.9" fill="#7a7a7a"/><rect x="168.7" y="235.8" width="9.5" height="0.9" fill="#7a7a7a"/></svg>
<svg width="720" height="480">
<path d="M161.6 105h1.2l.9 2.3.9-2.3h1.2v6h-1.2v-3.5l-.9 2-.9-2v3.5h-1.2z" fill="#0b8a8f"/><path d="M164.6 105h1.2v6h-1.2z" fill="#045a60"/>
<path d="M181.7 106.3l3.7 4.6M185.4 106.3l-3.7 4.6" stroke="#9a9a9a" stroke-width="0.6"/>
<g stroke-linecap="round" stroke-linejoin="round">
<path d="M163.4 129l6.2-7.1" stroke="#dcdcdc" stroke-width="3.2" stroke-linecap="butt"/><path d="M163.4 129l6.2-7.1" stroke="#4a4a4a" stroke-width="1.9" stroke-dasharray="0.7 0.7" stroke-linecap="butt"/><path d="M163.4 129l6.2-7.1" stroke="#dcdcdc" stroke-width="0.5" stroke-linecap="butt"/>
<path d="M161.3 131.6l.9-3.6 2.5 2.1z" fill="#dcdcdc"/><path d="M168.7 120.8c.8-1.1 1.8-1.3 2.7-.5s.9 1.7 0 2.7z" fill="#e4e4e4"/>
<path d="M185.2 119.6l1 .8-5.1 7.3-1.9-1.5z" fill="#d4d4d4"/><path d="M179 126l2.3 1.8c-.3 2-2.3 3.4-4.9 4.5c.4-2.7 1.1-4.9 2.6-6.3z" fill="#d4d4d4"/>
<path d="M167.25 139l4.15 3.3-2.9 3.8-4.2-3.35z" fill="#c8c8c8" stroke="#c8c8c8" stroke-width="0.6"/><path d="M164.3 142.75c-1.5 1.8-2.6 3-2.9 4.15s.3 2.3 1.6 2.5h2.2l3.3-3.3" fill="none" stroke="#bdbdbd" stroke-width="0.8"/><path d="M164.3 150.2h4.2" stroke="#aaa" stroke-width="0.6"/>
<path d="M163.6 167.6l4.8-8.8M177.9 167.1l7.2-7.3M181.8 159.6l3.5-.1-.1 3.5" stroke="#d6d6d6" stroke-width="1.2" fill="none"/>
<ellipse cx="166.1" cy="182.5" rx="4.2" ry="4.8" fill="none" stroke="#d6d6d6" stroke-width="1.15"/><rect x="177.1" y="177.7" width="8.3" height="9.7" rx="1" fill="none" stroke="#d6d6d6" stroke-width="1.15"/>
<g fill="#444" stroke="#c0c0c0" stroke-width="0.9"><rect x="161" y="216.5" width="7.2" height="9.3"/><rect x="164.3" y="220.2" width="7.4" height="10"/>
<rect x="179.4" y="216.5" width="7.4" height="9.3"/><rect x="176.1" y="220.2" width="7.2" height="10"/></g>
</g>
<path d="M177 140h8.6v2.4h-.7l-.5-1.3h-2.3v7.4l1.3.4v.8h-4.2v-.8l1.3-.4v-7.4h-2.3l-.5 1.3h-.7z" fill="#c8c8c8"/>
<g fill="none" stroke="#c4c4c4" stroke-width="0.6">
<rect x="160.3" y="241.5" width="6.5" height="8"/><path d="M163.5 241.5v8M160.3 245.5h6.5"/>
<rect x="170" y="242.3" width="6.5" height="7.2"/><path d="M171.8 246h3M173.3 244.6v2.8M171 241.3h4.5"/>
<rect x="179.5" y="241.5" width="7" height="8"/><path d="M179.5 245.5h7"/>
<path d="M161.3 253.6l3.8 5.8M165.1 253.6l-3.8 5.8"/><ellipse cx="161.3" cy="260.3" rx="0.9" ry="1.1"/><ellipse cx="165.1" cy="260.3" rx="0.9" ry="1.1"/>
<rect x="170" y="253.6" width="3.8" height="5"/><rect x="172.3" y="255.8" width="4" height="5.6" fill="#777"/>
<rect x="179.6" y="253.6" width="4" height="6.5"/><rect x="182.2" y="255.3" width="4.3" height="6" fill="#777"/>
</g>
</svg>
<div style="left:475.5px;top:100.7px;width:76.6px;height:98.8px;background:#444;box-shadow:0 0 1.5px rgba(0,0,0,.6);"></div>
<svg width="720" height="480"><rect x="476" y="101.2" width="75.6" height="13.9" fill="#fdfdfd"/></svg>
<span class="t" style="left:487.3px;top:104.6px;font-size:6.11px;color:#8a8a8a;transform:scaleX(0.71) rotate(0.03deg);">Layer Manager</span>
<svg width="720" height="480"><rect x="477.3" y="128" width="72.6" height="58.6" fill="#2b2b2b"/><rect x="477.3" y="138.2" width="72.6" height="9.9" fill="#5285a6"/></svg>
<span class="t" style="left:478px;top:128.9px;font-size:5.54px;color:#e8e8e8;transform:scaleX(0.71) rotate(0.03deg);">shotCam</span>
<div style="left:479.5px;top:140px;width:7px;height:6.8px;border:0.5px solid #6b9bbb;background:#4d80a2;"></div>
<div style="left:488.3px;top:140px;width:7.3px;height:6.8px;border:0.5px solid #6b9bbb;background:#4f82a4;"></div>
<span class="t" style="left:481.5px;top:139.5px;font-size:5.68px;color:#f0f0f0;transform:scaleX(0.71) rotate(0.03deg);">V</span>
<span class="t" style="left:498px;top:139.5px;font-size:5.82px;color:#fff;transform:scaleX(0.71) rotate(0.03deg);">Thumbnails</span>
<div style="left:479.5px;top:150.6px;width:7px;height:6.8px;border:0.5px solid #3c3c3c;background:#303030;"></div>
<div style="left:488.3px;top:150.6px;width:7.3px;height:6.8px;border:0.5px solid #3c3c3c;background:#303030;"></div>
<span class="t" style="left:498px;top:150.1px;font-size:5.82px;color:#bdbdbd;transform:scaleX(0.71) rotate(0.03deg);">First Pass</span>
<div style="left:479.5px;top:160.4px;width:7px;height:6.8px;border:0.5px solid #4c4c4c;background:#2b2b2b;"></div>
<div style="left:488.3px;top:160.4px;width:7.3px;height:6.8px;border:0.5px solid #4c4c4c;background:#2b2b2b;"></div>
<span class="t" style="left:481.5px;top:159.9px;font-size:5.68px;color:#f0f0f0;transform:scaleX(0.71) rotate(0.03deg);">V</span>
<span class="t" style="left:490.5px;top:159.9px;font-size:5.68px;color:#f0f0f0;transform:scaleX(0.71) rotate(0.03deg);">S</span>
<span class="t" style="left:498px;top:159.9px;font-size:5.82px;color:#e0e0e0;transform:scaleX(0.71) rotate(0.03deg);">Box</span>
<div style="left:479.5px;top:171.1px;width:7px;height:6.8px;border:0.5px solid #4c4c4c;background:#2b2b2b;"></div>
<div style="left:488.3px;top:171.1px;width:7.3px;height:6.8px;border:0.5px solid #4c4c4c;background:#2b2b2b;"></div>
<span class="t" style="left:481.5px;top:170.6px;font-size:5.68px;color:#f0f0f0;transform:scaleX(0.71) rotate(0.03deg);">V</span>
<span class="t" style="left:490.5px;top:170.6px;font-size:5.68px;color:#f0f0f0;transform:scaleX(0.71) rotate(0.03deg);">S</span>
<span class="t" style="left:498px;top:170.6px;font-size:5.82px;color:#e0e0e0;transform:scaleX(0.71) rotate(0.03deg);">Ramp</span>
<svg width="720" height="480">
<path d="M479.6 105h1.3l1 2.2 1-2.2h1.3v6h-1.3v-3.4l-1 2-1-2v3.4h-1.3z" fill="#0b8a8f"/><path d="M482.9 105h1.3v6h-1.3z" fill="#045a60"/>
<path d="M543 105.5l4.2 5M547.2 105.5l-4.2 5" stroke="#888" stroke-width="0.6"/>
<path d="M544 121.5a2.3 2.3 0 0 1 4-1.2M548.6 123a2.3 2.3 0 0 1-4 1.2" fill="none" stroke="#4db04d" stroke-width="0.9"/><path d="M548.8 118.8v2h-2zM543.8 125.7v-2h2z" fill="#4db04d"/>
<path d="M479 193.5l2.5-2.3v4.6zM488.3 193.5l2.5-2.3v4.6z" fill="#e4e4e4"/><rect x="481.5" y="191.5" width="1.6" height="4" fill="#3ac"/><rect x="490.8" y="191.5" width="1.6" height="4" fill="#3ac"/><path d="M493 194.5v2" stroke="#3ac" stroke-width="0.8"/>
<path d="M534.5 192.5l3.5-2.3 1.5 4-3.5 1.5z" fill="#e4e4e4"/><circle cx="539.7" cy="190.8" r="1" fill="#3ac"/>
<rect x="544" y="191" width="4" height="5.5" rx="0.5" fill="#ddd"/><rect x="543.5" y="189.8" width="5" height="1" fill="#111"/><rect x="545" y="192" width="2" height="3.5" fill="#555"/>
</svg>
<svg width="720" height="480"><rect x="612.9" y="57.7" width="0.9" height="385.5" fill="#383838"/><rect x="613.7" y="57" width="100" height="273" fill="#444"/></svg>
<span class="t" style="left:618.3px;top:68.8px;font-size:6.11px;color:#c6c6c6;transform:scaleX(0.71) rotate(0.03deg);">Channels</span>
<span class="t" style="left:641.7px;top:68.8px;font-size:6.11px;color:#c6c6c6;transform:scaleX(0.71) rotate(0.03deg);">Edit</span>
<span class="t" style="left:654.5px;top:68.8px;font-size:6.11px;color:#c6c6c6;transform:scaleX(0.71) rotate(0.03deg);">Object</span>
<span class="t" style="left:673.3px;top:68.8px;font-size:6.11px;color:#c6c6c6;transform:scaleX(0.71) rotate(0.03deg);">Show</span>
<svg width="720" height="480"><rect x="616" y="77.8" width="97" height="250" fill="#2b2b2b"/></svg>
<svg width="720" height="480">
<path d="M693.5 60v2.5M693.5 62.5l-2 2.5M693.5 62.5l2 2.5" stroke="#ddd" stroke-width="0.7"/><circle cx="693.5" cy="59.8" r="0.9" fill="#3c3"/><circle cx="691.3" cy="65" r="0.9" fill="#d33"/><circle cx="695.7" cy="65" r="0.9" fill="#36d"/>
<path d="M699 65.5v-3a2 2 0 0 1 4 0v3" fill="none" stroke="#3bc" stroke-width="1.4"/>
<rect x="707" y="59.5" width="4.5" height="5.5" fill="none" stroke="#999" stroke-width="0.6"/><path d="M708 64l3-4" stroke="#3bc" stroke-width="0.9"/>
</svg>
<svg width="720" height="480"><rect x="714" y="57.7" width="6" height="385.5" fill="#444"/><rect x="713.3" y="57.7" width="6.7" height="73" fill="#484848"/><rect x="713.3" y="131" width="6.7" height="1.2" fill="#383838"/><rect x="713.3" y="184" width="6.7" height="1.2" fill="#383838"/><rect x="713.3" y="226" width="6.7" height="1" fill="#3c3c3c"/></svg>
<span class="t" style="left:716.3px;top:62.9px;font-size:4.7px;color:#e4e4e4;transform-origin:0 0;transform:rotate(90.03deg) translate(0,-4px) scaleX(1.139);">Channel Box / Layer Editor</span>
<span class="t" style="left:716.3px;top:138px;font-size:4.7px;color:#8a8a8a;transform-origin:0 0;transform:rotate(90.03deg) translate(0,-4px) scaleX(1.211);">Modeling Toolkit</span>
<span class="t" style="left:716.3px;top:190.5px;font-size:4.7px;color:#8a8a8a;transform-origin:0 0;transform:rotate(90.03deg) translate(0,-4px) scaleX(0.988);">Attribute Editor</span>
<div style="left:647px;top:329.7px;width:32px;height:0.6px;border-top:0.7px dotted #777;"></div>
<div style="left:615.7px;top:334px;width:97px;height:107.5px;background:#444;border:0.6px solid #505050;"></div>
<svg width="720" height="480"><rect x="616.3" y="334.6" width="95.8" height="8" fill="#3a3a3a"/><rect x="617" y="335.3" width="19.5" height="7.3" fill="#414141"/></svg>
<span class="t" style="left:620px;top:335.1px;font-size:6.11px;color:#9a9a9a;transform:scaleX(0.71) rotate(0.03deg);">Display</span>
<svg width="720" height="480"><rect x="639" y="335" width="17.5" height="7.6" fill="#4a4a4a"/></svg>
<span class="t" style="left:642.5px;top:335.1px;font-size:6.11px;color:#f0f0f0;transform:scaleX(0.71) rotate(0.03deg);">Anim</span>
<span class="t" style="left:619.9px;top:343.3px;font-size:6.11px;color:#c6c6c6;transform:scaleX(0.605) rotate(0.03deg);">Layers</span>
<span class="t" style="left:637.2px;top:343.3px;font-size:6.11px;color:#c6c6c6;transform:scaleX(0.727) rotate(0.03deg);">Options</span>
<span class="t" style="left:658.6px;top:343.3px;font-size:6.11px;color:#c6c6c6;transform:scaleX(0.7) rotate(0.03deg);">Show</span>
<span class="t" style="left:675px;top:343.3px;font-size:6.11px;color:#c6c6c6;transform:scaleX(0.692) rotate(0.03deg);">Help</span>
<svg width="720" height="480"><rect x="617.6" y="364" width="92.6" height="65" fill="#2b2b2b"/></svg>
<svg width="720" height="480"><ellipse cx="619.8" cy="358.3" rx="1" ry="1.9" fill="none" stroke="#e0703a" stroke-width="0.8"/><path d="M623.2 353.8v3M621.9 355.2h2.6" stroke="#e0703a" stroke-width="0.6"/><ellipse cx="628.4" cy="358.3" rx="1" ry="1.9" fill="none" stroke="#e0703a" stroke-width="0.8"/><path d="M631.8 353.8v3M630.5 355.2h2.6" stroke="#e0703a" stroke-width="0.6"/><rect x="630" y="359" width="1.7" height="1.8" fill="#ddd"/><path d="M637 357.3l1-.9v4" fill="none" stroke="#e0703a" stroke-width="0.8"/><path d="M641.1 353.8v3M639.8 355.2h2.6" stroke="#e0703a" stroke-width="0.6"/><rect x="639.3" y="359" width="1.7" height="1.8" fill="#ddd"/><path d="M676 357.5l2.5-2.3v4.6z" fill="#e4e4e4"/><rect x="678.6" y="355.5" width="1.6" height="4" fill="#3ac"/><path d="M685.3 357.5l2.5-2.3v4.6z" fill="#e4e4e4"/><rect x="687.9" y="355.5" width="1.6" height="4" fill="#3ac"/><path d="M694.5 357l3.5-2.3 1.5 4-3.5 1.5z" fill="#dcdcdc"/><circle cx="699.1" cy="355.3" r="1" fill="#3ac"/><path d="M704 357l3.5-2.3 1.5 4-3.5 1.5z" fill="#dcdcdc"/><circle cx="708.6" cy="355.3" r="1" fill="#3ac"/></svg>
<span class="t" style="left:617.3px;top:432.5px;font-size:6.11px;color:#7e7e7e;transform:scaleX(0.71) rotate(0.03deg);">Weight:</span>
<div style="left:633.8px;top:432.8px;width:13px;height:6.8px;background:#3c3c3c;border:0.5px solid #505050;"></div>
<span class="t" style="left:635.7px;top:432.2px;font-size:5.11px;color:#777;transform:scaleX(0.71) rotate(0.03deg);">1.000</span>
<svg width="720" height="480"><rect x="647" y="435.6" width="54" height="2.3" fill="#505050"/><rect x="701.3" y="433.3" width="1.7" height="6.3" fill="#8a8a8a"/></svg>
<div style="left:704.5px;top:432.8px;width:5.5px;height:6.8px;background:#4c4c4c;border:0.5px solid #5a5a5a;"></div>
<span class="t" style="left:706.2px;top:431.8px;font-size:4.26px;color:#888;transform:scaleX(0.71) rotate(0.03deg);">K</span>
<svg width="720" height="480"><rect x="0" y="443.2" width="720" height="2" fill="#373737"/><rect x="0" y="445.2" width="720" height="35" fill="#444"/><rect x="3.7" y="446.2" width="604.8" height="14.2" fill="#303030"/><rect x="260.7" y="446.2" width="6.3" height="14.2" fill="#7a7a7a"/></svg>
<svg width="720" height="480"><path d="M14.2 452.2v8" stroke="#d0d0d0" stroke-width="0.8"/><path d="M27.5 452.2v8" stroke="#d0d0d0" stroke-width="0.8"/><path d="M40.9 452.2v8" stroke="#d0d0d0" stroke-width="0.8"/><path d="M54.2 452.2v8" stroke="#d0d0d0" stroke-width="0.8"/><path d="M67.5 452.2v8" stroke="#d0d0d0" stroke-width="0.8"/><path d="M80.9 452.2v8" stroke="#d0d0d0" stroke-width="0.8"/><path d="M94.2 452.2v8" stroke="#d0d0d0" stroke-width="0.8"/><path d="M107.5 452.2v8" stroke="#d0d0d0" stroke-width="0.8"/><path d="M120.9 452.2v8" stroke="#d0d0d0" stroke-width="0.8"/><path d="M134.2 452.2v8" stroke="#d0d0d0" stroke-width="0.8"/><path d="M147.5 452.2v8" stroke="#d0d0d0" stroke-width="0.8"/><path d="M160.9 452.2v8" stroke="#d0d0d0" stroke-width="0.8"/><path d="M174.2 452.2v8" stroke="#d0d0d0" stroke-width="0.8"/><path d="M187.5 452.2v8" stroke="#d0d0d0" stroke-width="0.8"/><path d="M200.9 452.2v8" stroke="#d0d0d0" stroke-width="0.8"/><path d="M214.2 452.2v8" stroke="#d0d0d0" stroke-width="0.8"/><path d="M227.5 452.2v8" stroke="#d0d0d0" stroke-width="0.8"/><path d="M240.9 452.2v8" stroke="#d0d0d0" stroke-width="0.8"/><path d="M254.2 452.2v8" stroke="#d0d0d0" stroke-width="0.8"/><path d="M267.5 452.2v8" stroke="#d0d0d0" stroke-width="0.8"/><path d="M280.9 452.2v8" stroke="#d0d0d0" stroke-width="0.8"/><path d="M294.2 452.2v8" stroke="#d0d0d0" stroke-width="0.8"/><path d="M307.5 452.2v8" stroke="#d0d0d0" stroke-width="0.8"/><path d="M320.9 452.2v8" stroke="#d0d0d0" stroke-width="0.8"/><path d="M334.2 452.2v8" stroke="#d0d0d0" stroke-width="0.8"/><path d="M347.5 452.2v8" stroke="#d0d0d0" stroke-width="0.8"/><path d="M360.9 452.2v8" stroke="#d0d0d0" stroke-width="0.8"/><path d="M374.2 452.2v8" stroke="#d0d0d0" stroke-width="0.8"/><path d="M387.6 452.2v8" stroke="#d0d0d0" stroke-width="0.8"/><path d="M400.9 452.2v8" stroke="#d0d0d0" stroke-width="0.8"/><path d="M414.2 452.2v8" stroke="#d0d0d0" stroke-width="0.8"/><path d="M427.6 452.2v8" stroke="#d0d0d0" stroke-width="0.8"/><path d="M440.9 452.2v8" stroke="#d0d0d0" stroke-width="0.8"/><path d="M454.2 452.2v8" stroke="#d0d0d0" stroke-width="0.8"/><path d="M467.6 452.2v8" stroke="#d0d0d0" stroke-width="0.8"/><path d="M480.9 452.2v8" stroke="#d0d0d0" stroke-width="0.8"/><path d="M494.2 452.2v8" stroke="#d0d0d0" stroke-width="0.8"/><path d="M507.6 452.2v8" stroke="#d0d0d0" stroke-width="0.8"/><path d="M520.9 452.2v8" stroke="#d0d0d0" stroke-width="0.8"/><path d="M534.2 452.2v8" stroke="#d0d0d0" stroke-width="0.8"/><path d="M547.6 452.2v8" stroke="#d0d0d0" stroke-width="0.8"/><path d="M560.9 452.2v8" stroke="#d0d0d0" stroke-width="0.8"/><path d="M574.2 452.2v8" stroke="#d0d0d0" stroke-width="0.8"/><path d="M587.6 452.2v8" stroke="#d0d0d0" stroke-width="0.8"/><path d="M600.9 452.2v8" stroke="#d0d0d0" stroke-width="0.8"/><rect x="7.4" y="456.2" width="6.8" height="4" fill="#3a525c" stroke="#5c94a8" stroke-width="0.75"/><rect x="87.4" y="456.2" width="6.8" height="4" fill="#3a525c" stroke="#5c94a8" stroke-width="0.75"/><rect x="200.7" y="456.2" width="6.8" height="4" fill="#3a525c" stroke="#5c94a8" stroke-width="0.75"/><rect x="267.4" y="456.2" width="6.8" height="4" fill="#3a525c" stroke="#5c94a8" stroke-width="0.75"/><rect x="314" y="456.2" width="6.8" height="4" fill="#3a525c" stroke="#5c94a8" stroke-width="0.75"/><rect x="367.4" y="456.2" width="6.8" height="4" fill="#3a525c" stroke="#5c94a8" stroke-width="0.75"/><rect x="414.1" y="456.2" width="6.8" height="4" fill="#3a525c" stroke="#5c94a8" stroke-width="0.75"/><rect x="467.4" y="456.2" width="6.8" height="4" fill="#3a525c" stroke="#5c94a8" stroke-width="0.75"/><rect x="507.4" y="456.2" width="6.8" height="4" fill="#3a525c" stroke="#5c94a8" stroke-width="0.75"/><rect x="540.7" y="456.2" width="6.8" height="4" fill="#3a525c" stroke="#5c94a8" stroke-width="0.75"/><rect x="560.7" y="456.2" width="6.8" height="4" fill="#3a525c" stroke="#5c94a8" stroke-width="0.75"/></svg>
<span class="t" style="left:15.5px;top:445.3px;font-size:4.97px;color:#b0b0b0;transform:scaleX(0.71) rotate(0.03deg);">2</span>
<span class="t" style="left:28.8px;top:445.3px;font-size:4.97px;color:#b0b0b0;transform:scaleX(0.71) rotate(0.03deg);">4</span>
<span class="t" style="left:42.2px;top:445.3px;font-size:4.97px;color:#b0b0b0;transform:scaleX(0.71) rotate(0.03deg);">6</span>
<span class="t" style="left:55.5px;top:445.3px;font-size:4.97px;color:#b0b0b0;transform:scaleX(0.71) rotate(0.03deg);">8</span>
<span class="t" style="left:68.8px;top:445.3px;font-size:4.97px;color:#b0b0b0;transform:scaleX(0.71) rotate(0.03deg);">10</span>
<span class="t" style="left:82.2px;top:445.3px;font-size:4.97px;color:#b0b0b0;transform:scaleX(0.71) rotate(0.03deg);">12</span>
<span class="t" style="left:95.5px;top:445.3px;font-size:4.97px;color:#b0b0b0;transform:scaleX(0.71) rotate(0.03deg);">14</span>
<span class="t" style="left:108.8px;top:445.3px;font-size:4.97px;color:#b0b0b0;transform:scaleX(0.71) rotate(0.03deg);">16</span>
<span class="t" style="left:122.2px;top:445.3px;font-size:4.97px;color:#b0b0b0;transform:scaleX(0.71) rotate(0.03deg);">18</span>
<span class="t" style="left:135.5px;top:445.3px;font-size:4.97px;color:#b0b0b0;transform:scaleX(0.71) rotate(0.03deg);">20</span>
<span class="t" style="left:148.8px;top:445.3px;font-size:4.97px;color:#b0b0b0;transform:scaleX(0.71) rotate(0.03deg);">22</span>
<span class="t" style="left:162.2px;top:445.3px;font-size:4.97px;color:#b0b0b0;transform:scaleX(0.71) rotate(0.03deg);">24</span>
<span class="t" style="left:175.5px;top:445.3px;font-size:4.97px;color:#b0b0b0;transform:scaleX(0.71) rotate(0.03deg);">26</span>
<span class="t" style="left:188.8px;top:445.3px;font-size:4.97px;color:#b0b0b0;transform:scaleX(0.71) rotate(0.03deg);">28</span>
<span class="t" style="left:202.2px;top:445.3px;font-size:4.97px;color:#b0b0b0;transform:scaleX(0.71) rotate(0.03deg);">30</span>
<span class="t" style="left:215.5px;top:445.3px;font-size:4.97px;color:#b0b0b0;transform:scaleX(0.71) rotate(0.03deg);">32</span>
<span class="t" style="left:228.8px;top:445.3px;font-size:4.97px;color:#b0b0b0;transform:scaleX(0.71) rotate(0.03deg);">34</span>
<span class="t" style="left:242.2px;top:445.3px;font-size:4.97px;color:#b0b0b0;transform:scaleX(0.71) rotate(0.03deg);">36</span>
<span class="t" style="left:255.5px;top:445.3px;font-size:4.97px;color:#b0b0b0;transform:scaleX(0.71) rotate(0.03deg);">38</span>
<span class="t" style="left:268.8px;top:445.3px;font-size:4.97px;color:#b0b0b0;transform:scaleX(0.71) rotate(0.03deg);">40</span>
<span class="t" style="left:282.2px;top:445.3px;font-size:4.97px;color:#b0b0b0;transform:scaleX(0.71) rotate(0.03deg);">42</span>
<span class="t" style="left:295.5px;top:445.3px;font-size:4.97px;color:#b0b0b0;transform:scaleX(0.71) rotate(0.03deg);">44</span>
<span class="t" style="left:308.8px;top:445.3px;font-size:4.97px;color:#b0b0b0;transform:scaleX(0.71) rotate(0.03deg);">46</span>
<span class="t" style="left:322.2px;top:445.3px;font-size:4.97px;color:#b0b0b0;transform:scaleX(0.71) rotate(0.03deg);">48</span>
<span class="t" style="left:335.5px;top:445.3px;font-size:4.97px;color:#b0b0b0;transform:scaleX(0.71) rotate(0.03deg);">50</span>
<span class="t" style="left:348.8px;top:445.3px;font-size:4.97px;color:#b0b0b0;transform:scaleX(0.71) rotate(0.03deg);">52</span>
<span class="t" style="left:362.2px;top:445.3px;font-size:4.97px;color:#b0b0b0;transform:scaleX(0.71) rotate(0.03deg);">54</span>
<span class="t" style="left:375.5px;top:445.3px;font-size:4.97px;color:#b0b0b0;transform:scaleX(0.71) rotate(0.03deg);">56</span>
<span class="t" style="left:388.9px;top:445.3px;font-size:4.97px;color:#b0b0b0;transform:scaleX(0.71) rotate(0.03deg);">58</span>
<span class="t" style="left:402.2px;top:445.3px;font-size:4.97px;color:#b0b0b0;transform:scaleX(0.71) rotate(0.03deg);">60</span>
<span class="t" style="left:415.5px;top:445.3px;font-size:4.97px;color:#b0b0b0;transform:scaleX(0.71) rotate(0.03deg);">62</span>
<span class="t" style="left:428.9px;top:445.3px;font-size:4.97px;color:#b0b0b0;transform:scaleX(0.71) rotate(0.03deg);">64</span>
<span class="t" style="left:442.2px;top:445.3px;font-size:4.97px;color:#b0b0b0;transform:scaleX(0.71) rotate(0.03deg);">66</span>
<span class="t" style="left:455.5px;top:445.3px;font-size:4.97px;color:#b0b0b0;transform:scaleX(0.71) rotate(0.03deg);">68</span>
<span class="t" style="left:468.9px;top:445.3px;font-size:4.97px;color:#b0b0b0;transform:scaleX(0.71) rotate(0.03deg);">70</span>
<span class="t" style="left:482.2px;top:445.3px;font-size:4.97px;color:#b0b0b0;transform:scaleX(0.71) rotate(0.03deg);">72</span>
<span class="t" style="left:495.5px;top:445.3px;font-size:4.97px;color:#b0b0b0;transform:scaleX(0.71) rotate(0.03deg);">74</span>
<span class="t" style="left:508.9px;top:445.3px;font-size:4.97px;color:#b0b0b0;transform:scaleX(0.71) rotate(0.03deg);">76</span>
<span class="t" style="left:522.2px;top:445.3px;font-size:4.97px;color:#b0b0b0;transform:scaleX(0.71) rotate(0.03deg);">78</span>
<span class="t" style="left:535.5px;top:445.3px;font-size:4.97px;color:#b0b0b0;transform:scaleX(0.71) rotate(0.03deg);">80</span>
<span class="t" style="left:548.9px;top:445.3px;font-size:4.97px;color:#b0b0b0;transform:scaleX(0.71) rotate(0.03deg);">82</span>
<span class="t" style="left:562.2px;top:445.3px;font-size:4.97px;color:#b0b0b0;transform:scaleX(0.71) rotate(0.03deg);">84</span>
<span class="t" style="left:575.5px;top:445.3px;font-size:4.97px;color:#b0b0b0;transform:scaleX(0.71) rotate(0.03deg);">86</span>
<span class="t" style="left:588.9px;top:445.3px;font-size:4.97px;color:#b0b0b0;transform:scaleX(0.71) rotate(0.03deg);">88</span>
<span class="t" style="left:602.2px;top:445.3px;font-size:4.97px;color:#b0b0b0;transform:scaleX(0.71) rotate(0.03deg);">90</span>
<span class="t" style="left:261.5px;top:452.3px;font-size:4.83px;color:#fff;transform:scaleX(0.71) rotate(0.03deg);">39</span>
<svg width="720" height="480"><rect x="612.6" y="449.2" width="32.5" height="9.2" fill="#2b2b2b"/></svg>
<span class="t" style="left:614.7px;top:449.9px;font-size:5.96px;color:#d8d8d8;transform:scaleX(0.71) rotate(0.03deg);">39</span>
<svg width="720" height="480"><g fill="#bababa"><rect x="648.3" y="450.3" width="0.9" height="5.4"/><path d="M652.8 450.3l-3.5 2.7 3.5 2.7z"/><path d="M655.5 450.3l-3.5 2.7 3.5 2.7z"/><rect x="657.5" y="450.3" width="0.9" height="5.4"/><path d="M662 450.3l-3.5 2.7 3.5 2.7z"/><rect x="666.3" y="450.3" width="1" height="5.4" fill="#e0703a"/><path d="M671 450.3l-3.5 2.7 3.5 2.7z"/><path d="M680.3 449.6l-5.3 3.6 5.3 3.6z"/><path d="M684 449.6l5.3 3.6-5.3 3.6z"/><path d="M693 450.3l3.5 2.7-3.5 2.7z"/><rect x="696.7" y="450.3" width="1" height="5.4" fill="#e0703a"/><path d="M701.5 450.3l3.5 2.7-3.5 2.7z"/><rect x="705.2" y="450.3" width="0.9" height="5.4"/><path d="M709.3 450.3l3.5 2.7-3.5 2.7z"/><path d="M712 450.3l3.5 2.7-3.5 2.7z"/><rect x="715.7" y="450.3" width="0.9" height="5.4"/></g></svg>
<svg width="720" height="480"><rect x="0" y="462.5" width="720" height="0.7" fill="#3a3a3a"/><rect x="5" y="465" width="32.3" height="11.3" fill="#2b2b2b"/></svg>
<span class="t" style="left:7px;top:466.6px;font-size:5.96px;color:#d8d8d8;transform:scaleX(0.71) rotate(0.03deg);">1</span>
<svg width="720" height="480"><rect x="41" y="465" width="32.3" height="11.3" fill="#2b2b2b"/></svg>
<span class="t" style="left:43px;top:466.6px;font-size:5.96px;color:#d8d8d8;transform:scaleX(0.71) rotate(0.03deg);">1</span>
<svg width="720" height="480"><rect x="77.5" y="465" width="382" height="11.3" fill="#373737"/><rect x="78.5" y="465.6" width="143" height="10" rx="1" fill="#5d5d5d"/><rect x="80" y="466.5" width="6" height="8" rx="0.8" fill="#a4a4a4"/><rect x="214.3" y="466.5" width="6" height="8" rx="0.8" fill="#a4a4a4"/></svg>
<span class="t" style="left:88px;top:466.8px;font-size:5.82px;color:#eee;transform:scaleX(0.71) rotate(0.03deg);">1</span>
<span class="t" style="left:207.3px;top:466.8px;font-size:5.82px;color:#eee;transform:scaleX(0.71) rotate(0.03deg);">90</span>
<svg width="720" height="480"><rect x="462" y="465" width="32.3" height="11.3" fill="#2b2b2b"/></svg>
<span class="t" style="left:463.7px;top:466.6px;font-size:5.96px;color:#d8d8d8;transform:scaleX(0.71) rotate(0.03deg);">90</span>
<svg width="720" height="480"><rect x="498" y="465" width="33" height="11.3" fill="#2b2b2b"/></svg>
<span class="t" style="left:500px;top:466.6px;font-size:5.96px;color:#d8d8d8;transform:scaleX(0.71) rotate(0.03deg);">250</span>
<svg width="720" height="480"><rect x="533.3" y="465.3" width="1" height="10.4" fill="#8a8a8a"/><rect x="635" y="465.3" width="1" height="10.4" fill="#8a8a8a"/><rect x="693.2" y="465.3" width="1" height="10.4" fill="#8a8a8a"/></svg>
<div style="left:545px;top:465.3px;width:37.5px;height:10.8px;background:#363636;border:0.5px solid #484848;"></div>
<span class="t" style="left:547.6px;top:466.7px;font-size:5.96px;color:#d4d4d4;transform:scaleX(0.699) rotate(0.03deg);">No Character Set</span>
<div style="left:593.5px;top:465.3px;width:37.5px;height:10.8px;background:#363636;border:0.5px solid #484848;"></div>
<span class="t" style="left:595.6px;top:466.7px;font-size:5.96px;color:#d4d4d4;transform:scaleX(0.696) rotate(0.03deg);">No Anim Layer</span>
<svg width="720" height="480"><rect x="641" y="465.6" width="34.7" height="9.3" fill="#5d5d5d"/><rect x="669.6" y="465.6" width="0.5" height="9.3" fill="#4a4a4a"/></svg>
<span class="t" style="left:642.7px;top:466.4px;font-size:5.96px;color:#cfcfcf;transform:scaleX(0.71) rotate(0.03deg);">24 fps</span>
<svg width="720" height="480">
<path d="M539 469.3h3.2l-1.6 2zM587 469.3h3.2l-1.6 2z" fill="#7c7c7c"/>
<path d="M671 469.2h3.4l-1.7 2.1z" fill="#ddd"/>
<path d="M682.5 470.5v-1.2h5.5v2.7h-5.5v-.7" fill="none" stroke="#e0e0e0" stroke-width="0.8"/><path d="M684 468l-1.8 1.3 1.8 1.3zM686.3 473.3l1.8-1.3-1.8-1.3z" fill="#e0e0e0"/>
<ellipse cx="701" cy="470.3" rx="2.7" ry="3.4" fill="none" stroke="#c8c8c8" stroke-width="0.8"/><ellipse cx="701" cy="470.5" rx="0.9" ry="1.7" fill="#e0703a"/>
<circle cx="713.8" cy="467.6" r="1.1" fill="#e07a30"/><path d="M713.5 468.8l-.8 2.7M713.5 469.3l-2.3 1M713.5 469.3l2.3 1.2M712.7 471.5l-2.2 2.8M712.7 471.5l2.6 2.5" stroke="#e07a30" stroke-width="1" fill="none"/><circle cx="710.5" cy="467.2" r="0.9" fill="none" stroke="#ddd" stroke-width="0.5"/>
</svg>
</div></body></html>
